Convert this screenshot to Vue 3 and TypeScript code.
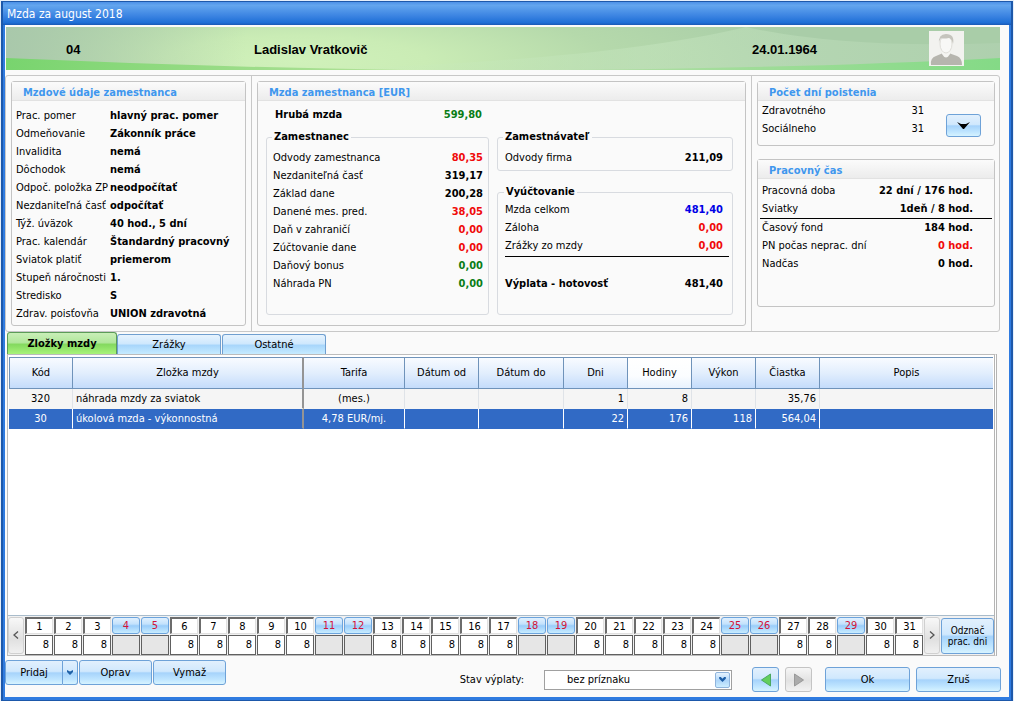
<script setup lang="ts">
import { ref } from 'vue'

type Tone = 'red' | 'green' | 'blue' | ''
interface Line { label: string; value: string; tone?: Tone }
interface Day { n: number; off: boolean }
interface PayItem {
  code: string; name: string; rate: string; days: string
  hours: string; output: string; amount: string
}

const employee: Line[] = [
  { label: 'Prac. pomer', value: 'hlavný prac. pomer' },
  { label: 'Odmeňovanie', value: 'Zákonník práce' },
  { label: 'Invalidita', value: 'nemá' },
  { label: 'Dôchodok', value: 'nemá' },
  { label: 'Odpoč. položka ZP', value: 'neodpočítať' },
  { label: 'Nezdaniteľná časť', value: 'odpočítať' },
  { label: 'Týž. úväzok', value: '40 hod., 5 dní' },
  { label: 'Prac. kalendár', value: 'Štandardný pracovný' },
  { label: 'Sviatok platiť', value: 'priemerom' },
  { label: 'Stupeň náročnosti', value: '1.' },
  { label: 'Stredisko', value: 'S' },
  { label: 'Zdrav. poisťovňa', value: 'UNION zdravotná' },
]

const deductions: Line[] = [
  { label: 'Odvody zamestnanca', value: '80,35', tone: 'red' },
  { label: 'Nezdaniteľná časť', value: '319,17' },
  { label: 'Základ dane', value: '200,28' },
  { label: 'Danené mes. pred.', value: '38,05', tone: 'red' },
  { label: 'Daň v zahraničí', value: '0,00', tone: 'red' },
  { label: 'Zúčtovanie dane', value: '0,00', tone: 'red' },
  { label: 'Daňový bonus', value: '0,00', tone: 'green' },
  { label: 'Náhrada PN', value: '0,00', tone: 'green' },
]

const settlement: Line[] = [
  { label: 'Mzda celkom', value: '481,40', tone: 'blue' },
  { label: 'Záloha', value: '0,00', tone: 'red' },
  { label: 'Zrážky zo mzdy', value: '0,00', tone: 'red' },
]

const scheduled: Line[] = [
  { label: 'Pracovná doba', value: '22 dní / 176 hod.' },
  { label: 'Sviatky', value: '1deň / 8 hod.' },
]

const worked: Line[] = [
  { label: 'Časový fond', value: '184 hod.' },
  { label: 'PN počas neprac. dní', value: '0 hod.', tone: 'red' },
  { label: 'Nadčas', value: '0 hod.' },
]

const tabs = ['Zložky mzdy', 'Zrážky', 'Ostatné']
const activeTab = ref(0)

const items: PayItem[] = [
  { code: '320', name: 'náhrada mzdy za sviatok', rate: '(mes.)', days: '1', hours: '8', output: '', amount: '35,76' },
  { code: '30', name: 'úkolová mzda - výkonnostná', rate: '4,78 EUR/mj.', days: '22', hours: '176', output: '118', amount: '564,04' },
]
const selected = ref(1)

const freeDays = [4, 5, 11, 12, 18, 19, 25, 26, 29]
const days = ref<Day[]>(
  Array.from({ length: 31 }, (_, i) => ({ n: i + 1, off: freeDays.includes(i + 1) })),
)
</script>

<template>
  <main class="window">
    <h1 class="title">Mzda za august 2018</h1>
    <div class="body">
      <header class="banner">
        <svg class="swoosh" viewBox="0 0 994 43" preserveAspectRatio="none" aria-hidden="true">
          <defs>
            <radialGradient id="glow" gradientUnits="userSpaceOnUse" cx="0" cy="0" r="1" gradientTransform="translate(290 34) scale(520 100)">
              <stop offset="0" stop-color="#d0f1ba" />
              <stop offset="0.25" stop-color="#caecb5" />
              <stop offset="0.6" stop-color="#b5d9ab" />
              <stop offset="1" stop-color="#a9cda8" />
            </radialGradient>
            <linearGradient id="shade" x1="0" y1="0" x2="1" y2="0">
              <stop offset="0" stop-color="#a9c8ab" />
              <stop offset="1" stop-color="#a9c8ab" stop-opacity="0" />
            </linearGradient>
            <linearGradient id="haze" x1="0" y1="0" x2="1" y2="0">
              <stop offset="0" stop-color="#c8ecbe" stop-opacity="0" />
              <stop offset="0.5" stop-color="#c6e6c0" stop-opacity="0.8" />
              <stop offset="1" stop-color="#b2d2b2" />
            </linearGradient>
            <linearGradient id="left" x1="0" y1="0" x2="1" y2="0">
              <stop offset="0" stop-color="#78d46e" />
              <stop offset="1" stop-color="#b4e29a" />
            </linearGradient>
            <linearGradient id="right" x1="0" y1="0" x2="1" y2="0">
              <stop offset="0" stop-color="#b4dea6" />
              <stop offset="1" stop-color="#84da86" />
            </linearGradient>
          </defs>
          <rect width="994" height="43" fill="url(#glow)" />
          <rect width="240" height="43" fill="url(#shade)" />
          <path d="M300 43Q600 34 740 0Q840 22 994 16V43Z" fill="url(#haze)" opacity="0.6" />
          <path d="M0 31Q200 40 400 43H0Z" fill="url(#left)" />
          <path d="M560 43Q800 41 994 31V43Z" fill="url(#right)" />
        </svg>
        <span class="emp-no">04</span>
        <span class="emp-name">Ladislav Vratkovič</span>
        <span class="emp-born">24.01.1964</span>
        <svg class="avatar" viewBox="0 0 35 35" role="img" aria-label="Foto">
          <rect width="35" height="35" fill="#f2f2ef" />
          <path d="M2 34Q1 27 7 25L13 22.500H21L28 25Q33 27 33 34Z" fill="#b6b5ae" />
          <path d="M13 18V23Q17 30 21 23V18Z" fill="#f5f5f2" />
          <ellipse cx="17" cy="13" rx="6" ry="9" fill="#f8f8f6" stroke="#dfded9" />
          <path d="M10 13Q9 3 17 3Q26 3 24 13Q23 8 20 7Q14 8 12 7Q10 9 10 13Z" fill="#c5c4bd" />
        </svg>
      </header>

      <div class="panels">
        <div class="cell">
          <section class="group">
            <h2>Mzdové údaje zamestnanca</h2>
            <dl class="facts">
              <div v-for="l in employee" :key="l.label"><dt>{{ l.label }}</dt><dd>{{ l.value }}</dd></div>
            </dl>
          </section>
        </div>

        <div class="cell">
          <section class="group">
            <h2>Mzda zamestnanca [EUR]</h2>
            <div class="wage">
              <div class="wage-col">
                <p class="gross"><b>Hrubá mzda</b><b class="green">599,80</b></p>
                <fieldset class="tall">
                  <legend>Zamestnanec</legend>
                  <dl class="sums">
                    <div v-for="l in deductions" :key="l.label"><dt>{{ l.label }}</dt><dd :class="l.tone">{{ l.value }}</dd></div>
                  </dl>
                </fieldset>
              </div>
              <div class="wage-col side">
                <fieldset>
                  <legend>Zamestnávateľ</legend>
                  <dl class="sums"><div><dt>Odvody firma</dt><dd>211,09</dd></div></dl>
                </fieldset>
                <fieldset class="tall">
                  <legend>Vyúčtovanie</legend>
                  <dl class="sums">
                    <div v-for="l in settlement" :key="l.label"><dt>{{ l.label }}</dt><dd :class="l.tone">{{ l.value }}</dd></div>
                  </dl>
                  <hr>
                  <dl class="sums payout"><div><dt>Výplata - hotovosť</dt><dd>481,40</dd></div></dl>
                </fieldset>
              </div>
            </div>
          </section>
        </div>

        <div class="cell right">
          <section class="group insured">
            <h2>Počet dní poistenia</h2>
            <div class="insured-row">
              <dl class="sums">
                <div><dt>Zdravotného</dt><dd>31</dd></div>
                <div><dt>Sociálneho</dt><dd>31</dd></div>
              </dl>
              <button class="btn drop" type="button" aria-label="Rozbaliť">
                <svg width="13" height="7" viewBox="0 0 13 7"><path d="M0 0L4 2H9L13 0L7 7H6Z" fill="#000" /></svg>
              </button>
            </div>
          </section>
          <section class="group worktime">
            <h2>Pracovný čas</h2>
            <dl class="sums">
              <div v-for="l in scheduled" :key="l.label"><dt>{{ l.label }}</dt><dd>{{ l.value }}</dd></div>
            </dl>
            <dl class="sums total">
              <div v-for="l in worked" :key="l.label"><dt>{{ l.label }}</dt><dd :class="l.tone">{{ l.value }}</dd></div>
            </dl>
          </section>
        </div>
      </div>

      <nav class="tabs">
        <button
          v-for="(t, i) in tabs" :key="t" type="button" class="tab"
          :class="{ active: i === activeTab }" @click="activeTab = i"
        >{{ t }}</button>
      </nav>

      <section class="sheet">
        <div class="grid-area">
          <table>
            <colgroup>
              <col class="c-code"><col class="c-name"><col class="c-rate"><col class="c-from"><col class="c-to">
              <col class="c-num"><col class="c-num"><col class="c-num"><col class="c-num"><col>
            </colgroup>
            <thead>
              <tr>
                <th>Kód</th><th class="frozen">Zložka mzdy</th><th>Tarifa</th><th>Dátum od</th><th>Dátum do</th>
                <th>Dni</th><th class="hot">Hodiny</th><th>Výkon</th><th>Čiastka</th><th>Popis</th>
              </tr>
            </thead>
            <tbody>
              <tr v-for="(r, i) in items" :key="r.code" :class="{ selected: i === selected }" @click="selected = i">
                <td class="mid">{{ r.code }}</td><td class="frozen">{{ r.name }}</td><td class="mid">{{ r.rate }}</td>
                <td></td><td></td><td class="num">{{ r.days }}</td><td class="num">{{ r.hours }}</td>
                <td class="num">{{ r.output }}</td><td class="num">{{ r.amount }}</td><td></td>
              </tr>
            </tbody>
          </table>
        </div>
        <div class="calendar">
          <button class="scroll" type="button" aria-label="Predchádzajúce dni">
            <svg width="6" height="8" viewBox="0 0 6 8"><path d="M5 0.5L1 4L5 7.5" fill="none" stroke="#555" stroke-width="1.3" /></svg>
          </button>
          <div class="days">
            <div v-for="d in days" :key="d.n" class="day" :class="{ off: d.off }">
              <button type="button" @click="d.off = !d.off">{{ d.n }}</button>
              <input type="text" :value="d.off ? '' : '8'" :aria-label="'Hodiny, deň ' + d.n" :disabled="d.off">
            </div>
          </div>
          <button class="scroll" type="button" aria-label="Ďalšie dni">
            <svg width="6" height="8" viewBox="0 0 6 8"><path d="M1 0.5L5 4L1 7.5" fill="none" stroke="#555" stroke-width="1.3" /></svg>
          </button>
          <button class="btn unmark" type="button">Odznač<br>prac. dni</button>
        </div>
      </section>

      <footer class="footer">
        <div class="edit">
          <div class="split">
            <button class="btn" type="button">Pridaj</button>
            <button class="btn more" type="button" aria-label="Ďalšie možnosti">
              <svg width="6" height="5" viewBox="0 0 6 5"><path d="M0 0L3 1.5L6 0V2L3 5L0 2Z" fill="#1f62a8" /></svg>
            </button>
          </div>
          <button class="btn" type="button">Oprav</button>
          <button class="btn" type="button">Vymaž</button>
        </div>
        <div class="state">
          <label for="state">Stav výplaty:</label>
          <div class="combo">
            <select id="state"><option>bez príznaku</option></select>
            <span class="combo-arrow">
              <svg width="7" height="5" viewBox="0 0 8 6"><path d="M0 0H2L4 2L6 0H8V2L4 6L0 2Z" fill="#1d5fa8" /></svg>
            </span>
          </div>
          <div class="nav">
            <button class="btn" type="button" aria-label="Predchádzajúci">
              <svg width="10" height="14" viewBox="0 0 10 14"><path d="M9.5 1V13L0.5 7Z" fill="#62cf5c" stroke="#4aa860" /></svg>
            </button>
            <button class="btn" type="button" aria-label="Nasledujúci" disabled>
              <svg width="10" height="14" viewBox="0 0 10 14"><path d="M0.5 1V13L9.5 7Z" fill="#ababab" stroke="#999" /></svg>
            </button>
          </div>
          <div class="confirm">
            <button class="btn" type="button">Ok</button>
            <button class="btn" type="button">Zruš</button>
          </div>
        </div>
      </footer>
    </div>
  </main>
</template>

<style>
html { background: #e4eefa; }
body { margin: 0; }
#app { display: flex; min-height: 100vh; }
</style>

<style scoped>
* { box-sizing: border-box; }
.window {
  flex: 1; min-width: 0;
  display: flex; flex-direction: column;
  margin: 1px 1px 0;
  border: 1px solid #1d58aa; border-left-width: 2px; border-right-width: 2px;
  background: #2f7be0;
  font: 11px/18px "DejaVu Sans Condensed", Tahoma, "Noto Sans", sans-serif;
  color: #000;
}
h1, h2, p, dl, dd { margin: 0; }
button, input, select { font: inherit; color: inherit; margin: 0; padding: 0; }
.title {
  height: 23px; padding-left: 4px;
  background: linear-gradient(#4d92e8, #62a5ee 15%, #3c84e2 60%, #1e6fd6 90%, #1a58b4);
  color: #fff; font-size: 12px; line-height: 24px; font-weight: 400;
}
.body {
  flex: 1; display: flex; flex-direction: column;
  margin: 0 2px 3px; padding: 2px 9px 0 0;
  background: #fafafa;
}

.banner {
  position: relative;
  display: grid; grid-template-columns: 248px 1fr 177px 35px 36px; align-items: center;
  height: 43px; margin-left: 1px;
  font: bold 13px/20px "Liberation Sans", Arial, sans-serif;
}
.swoosh { position: absolute; inset: 0; width: 100%; height: 100%; }
.banner span, .avatar { position: relative; }
.banner span { padding-top: 3px; }
.banner .emp-no { padding-left: 60px; }
.avatar { width: 35px; height: 35px; }

.panels {
  display: grid; grid-template-columns: 245px 1fr 248px;
  min-height: 257px; margin-top: 5px;
  border: 1px solid #c8c8c8; border-radius: 3px;
}
.cell { display: flex; padding: 5px; }
.cell + .cell { border-left: 1px solid #c8c8c8; }
.right { flex-direction: column; gap: 13px; padding: 5px 4px 24px 5px; }
.group {
  flex: 1; display: flex; flex-direction: column;
  border: 1px solid #c4c4c4; border-radius: 3px;
}
.group h2 {
  height: 19px; padding-left: 11px;
  border-bottom: 1px solid #e2e2e2;
  background: linear-gradient(#fbfbfb, #ececec);
  color: #3f97ee; font-size: 11px; line-height: 21px;
}
.facts { padding: 6px 0 0 4px; }
.facts div { display: flex; white-space: nowrap; }
.facts dt { flex: 0 0 94px; }
.facts dd { font-weight: bold; }
.sums div { display: flex; justify-content: space-between; white-space: nowrap; }
.sums dd { font-weight: bold; }
dd.red { color: #f00a0a; }
dd.blue { color: #0000e6; }
dd.green, .green { color: #0a7d16; }

.wage { flex: 1; display: grid; grid-template-columns: 223px 1fr; gap: 8px; padding: 5px 12px 10px 8px; }
.wage-col { display: flex; flex-direction: column; }
.gross { display: flex; justify-content: space-between; padding: 0 7px 0 9px; margin-bottom: 4px; }
.side { padding-top: 22px; gap: 12px; }
fieldset {
  min-width: 0; margin: 0; padding: 0 5px 4px 6px;
  border: 1px solid #d8dbe0; border-radius: 3px;
}
fieldset .sums { padding-top: 3px; }
.side fieldset { padding: 0 9px 3px 7px; }
.side .tall { padding-right: 3px; }
.side .tall .sums { padding-right: 6px; padding-top: 0; }
legend { margin-left: -2px; padding: 0 2px; font-weight: bold; }
.wage-col > .tall legend { margin-left: -1px; }
.tall { flex: 1; }
hr { height: 1px; margin: 1px 0 0; border: 0; background: #000; }
.payout { margin-top: 18px; font-weight: bold; }

.insured { flex: 0 0 65px; }
.insured-row { display: flex; justify-content: space-between; padding: 0 13px 0 4px; }
.insured-row .sums { flex: 0 0 162px; padding-top: 1px; }
.insured-row .sums dd { font-weight: 400; }
.drop { width: 35px; height: 23px; margin-top: 13px; }
.worktime > .sums { padding: 0 21px 0 4px; }
.worktime > .sums:first-of-type { padding-top: 3px; }
.worktime > .total { border-top: 1px solid #000; margin: 0 2px; padding: 0 19px 0 2px; }

.btn {
  display: inline-flex; align-items: center; justify-content: center;
  border: 1px solid #6ea2d8; border-radius: 3px;
  background: linear-gradient(#e2f0fd, #d0e8fd 45%, #a6d3fb 52%, #bfe5ff 80%, #d6f3ff);
}
.btn:disabled { border-color: #c4c4c4; background: linear-gradient(#f6f6f6, #e2e2e2 55%, #f2f2f2); }

.tabs { display: flex; align-items: flex-end; margin-left: 2px; height: 22px; }
.tab {
  width: 104px; height: 20px; margin-right: 1px; line-height: 18px;
  border: 1px solid #6f9fd0; border-bottom: 0; border-radius: 3px 3px 0 0;
  background: linear-gradient(#e6f3fe, #cfe8fd 45%, #a8d6fb 55%, #c6ebff);
}
.tab.active {
  width: 110px; height: 22px; margin-right: 0;
  border-color: #5c9c58;
  background: linear-gradient(#c9efb8, #b2e79c 45%, #84d95f 55%, #a8f47a);
  font-weight: bold;
}

.sheet {
  flex: 1; display: flex; flex-direction: column;
  margin: 0 3px 0 2px;
  border: 1px solid #bcbcbc; border-right: 3px double #b4b4b4;
  background: #fff;
}
.grid-area { flex: 1; padding: 2px 1px 0 1px; }
table { width: 100%; table-layout: fixed; border-collapse: separate; border-spacing: 0; }
.c-code { width: 64px; }
.c-name { width: 231px; }
.c-rate { width: 101px; }
.c-from { width: 74px; }
.c-to { width: 85px; }
.c-num { width: 64px; }
th {
  height: 32px; padding: 0;
  border: solid #6f93ba; border-width: 1px 1px 1px 0;
  background: linear-gradient(#f8fbff, #e2eefd 50%, #c4dcfb);
  font-weight: 400;
}
th:first-child { border-left-width: 1px; }
th:last-child, td:last-child { border-right: 0; }
th.hot { background: linear-gradient(#fff, #fbfdff 60%, #e8f2fe); }
td { height: 20px; padding: 0 3px; line-height: 19px; background: #f5f5f5; border-right: 1px solid #dfe3e8; border-bottom: 1px solid #f5f5f5; white-space: nowrap; }
.selected td { background: #316ac5; border-color: #fff; border-bottom-color: #316ac5; color: #fff; }
th.frozen, td.frozen { border-right: 2px solid #949494; }
.mid { text-align: center; }
.num { text-align: right; }

.calendar { display: flex; align-items: center; height: 40px; background: #f1f1f1; border-top: 1px solid #a9bccb; }
.scroll {
  width: 16px; height: 37px;
  border: 1px solid #d0d0d0; border-radius: 3px;
  background: linear-gradient(#f8f8f8, #e0e0e0 60%, #f0f0f0);
}
.days { flex: 1; display: flex; margin-left: 1px; }
.day { flex: 1; min-width: 0; display: flex; flex-direction: column; gap: 1px; padding-right: 1px; }
.day button {
  height: 17px; line-height: 16px;
  border: solid #6c6c6c; border-width: 2px 1px 1px 2px; border-color: #6c6c6c #e0e0e0 #e0e0e0 #6c6c6c;
  background: #fff;
}
.day input {
  width: 100%; height: 20px; padding-right: 3px; text-align: right;
  border: 1px solid #606060; border-radius: 0; background: #fff;
}
.day.off button {
  border: 1px solid #6ba3dc; border-radius: 3px; color: #d41238;
  background: linear-gradient(#e0f0fe, #c4e2fc 40%, #9acdfa 52%, #c8ecff);
}
.day.off input { background: #e6e6e6; }
.unmark { width: 53px; height: 36px; margin-left: 1px; font-size: 10px; line-height: 11px; }

.footer { display: flex; justify-content: space-between; align-items: flex-start; height: 41px; padding-top: 4px; }
.edit { display: flex; gap: 1px; }
.edit .btn { width: 73px; height: 25px; }
.edit .split { display: flex; }
.edit .split .btn { width: 58px; border-radius: 3px 0 0 3px; }
.edit .split .more { width: 15px; border-left: 0; border-radius: 0 3px 3px 0; }
.state { display: flex; align-items: center; margin: 7px -1px 0 0; }
.combo { position: relative; width: 188px; height: 20px; margin: 0 20px; }
.combo select {
  width: 100%; height: 100%; padding-left: 22px;
  appearance: none; border: 1px solid #a0a0a0; border-radius: 0; background: #fff;
}
.combo-arrow {
  position: absolute; right: 2px; top: 2px; width: 15px; height: 16px;
  display: flex; align-items: center; justify-content: center; pointer-events: none;
  border: 1px solid #8fb4dc; border-radius: 2px;
  background: linear-gradient(#e6f3fe, #aed6fa 55%, #cdeeff);
}
.nav { display: flex; gap: 6px; margin-right: 13px; }
.nav .btn { width: 27px; height: 25px; }
.confirm { display: flex; gap: 6px; }
.confirm .btn { width: 85px; height: 25px; }
</style>
